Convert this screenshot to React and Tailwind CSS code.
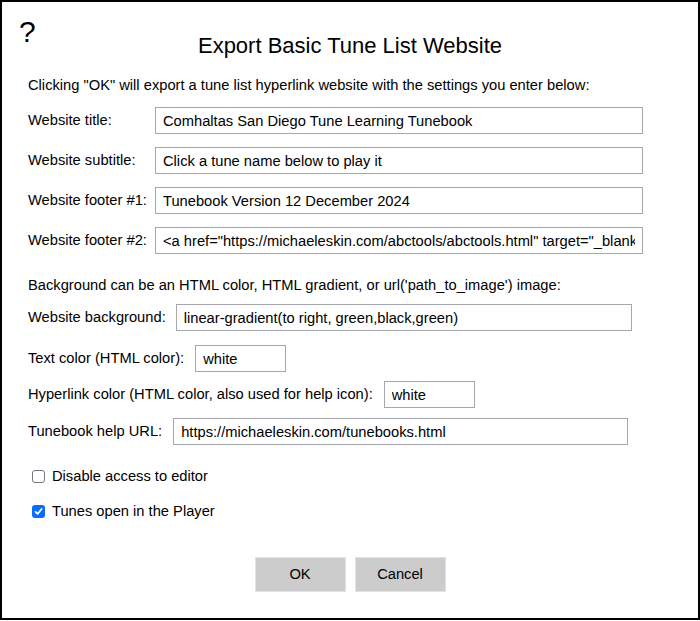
import { useState } from "react";

const font = { fontFamily: '"Liberation Sans", Arial, Helvetica, sans-serif' };

const Field = ({ value, className }) => (
  <input
    type="text"
    defaultValue={value}
    className={`h-[27px] border border-[#a6a6ad] bg-white px-[7px] text-[14.7px] text-black outline-none ${className}`}
  />
);

const Check = ({ checked, onClick, label }) => (
  <div className="flex h-[20px] items-center pl-[4px] cursor-default" onClick={onClick}>
    {checked ? (
      <span className="flex h-[13px] w-[13px] items-center justify-center rounded-[3px] bg-[#0b6ff5]">
        <svg width="9" height="9" viewBox="0 0 9 9" fill="none">
          <path d="M1.5 4.8 L3.6 6.9 L7.6 2" stroke="white" strokeWidth="1.7" strokeLinecap="round" strokeLinejoin="round" />
        </svg>
      </span>
    ) : (
      <span className="h-[13px] w-[13px] rounded-[3px] border border-[#77777f] bg-white" />
    )}
    <span className="ml-[7px]">{label}</span>
  </div>
);

const App = () => {
  const [noEditor, setNoEditor] = useState(false);
  const [inPlayer, setInPlayer] = useState(true);

  return (
    <div style={font} className="h-[620px] w-[700px] border-2 border-black bg-white text-[14.7px] text-black">
      {/* header */}
      <div className="grid h-[73px] grid-cols-[1fr_auto_1fr]">
        <div className="mt-[15px] pl-[17px] text-[30px] leading-none">?</div>
        <div className="mt-[33px] text-[22px] leading-none">Export Basic Tune List Website</div>
        <div />
      </div>

      <div className="flex flex-col pl-[26px]">
        <div className="flex h-[20px] items-center">
          Clicking "OK" will export a tune list hyperlink website with the settings you enter below:
        </div>

        <div className="mt-[12px] flex h-[27px] items-center">
          <span className="w-[127px]">Website title:</span>
          <Field value="Comhaltas San Diego Tune Learning Tunebook" className="w-[488px]" />
        </div>
        <div className="mt-[13px] flex h-[27px] items-center">
          <span className="w-[127px]">Website subtitle:</span>
          <Field value="Click a tune name below to play it" className="w-[488px]" />
        </div>
        <div className="mt-[13px] flex h-[27px] items-center">
          <span className="w-[127px]">Website footer #1:</span>
          <Field value="Tunebook Version 12 December 2024" className="w-[488px]" />
        </div>
        <div className="mt-[13px] flex h-[27px] items-center">
          <span className="w-[127px]">Website footer #2:</span>
          <Field
            value={'<a href="https://michaeleskin.com/abctools/abctools.html" target="_blank">Made with the ABC Transcription Tools</a>'}
            className="w-[488px]"
          />
        </div>

        <div className="mt-[21px] flex h-[20px] items-center">
          Background can be an HTML color, HTML gradient, or url('path_to_image') image:
        </div>
        <div className="mt-[9px] flex h-[27px] items-center">
          <span className="mr-[10px]">Website background:</span>
          <Field value="linear-gradient(to right, green,black,green)" className="w-[456px]" />
        </div>
        <div className="mt-[14px] flex h-[27px] items-center">
          <span className="mr-[11px]">Text color (HTML color):</span>
          <Field value="white" className="w-[91px]" />
        </div>
        <div className="mt-[9px] flex h-[27px] items-center">
          <span className="mr-[11px]">Hyperlink color (HTML color, also used for help icon):</span>
          <Field value="white" className="w-[91px]" />
        </div>
        <div className="mt-[10px] flex h-[27px] items-center">
          <span className="mr-[11px]">Tunebook help URL:</span>
          <Field value="https://michaeleskin.com/tunebooks.html" className="w-[455px]" />
        </div>

        <div className="mt-[21px]">
          <Check checked={noEditor} onClick={() => setNoEditor(!noEditor)} label="Disable access to editor" />
        </div>
        <div className="mt-[15px]">
          <Check checked={inPlayer} onClick={() => setInPlayer(!inPlayer)} label="Tunes open in the Player" />
        </div>
      </div>

      <div className="mt-[36px] flex justify-center gap-[9px]">
        <button className="h-[35px] w-[91px] border border-[#e2e2e2] bg-[#cccccc] text-[14.7px]">OK</button>
        <button className="h-[35px] w-[91px] border border-[#e2e2e2] bg-[#cccccc] text-[14.7px]">Cancel</button>
      </div>
    </div>
  );
};

export default App;
